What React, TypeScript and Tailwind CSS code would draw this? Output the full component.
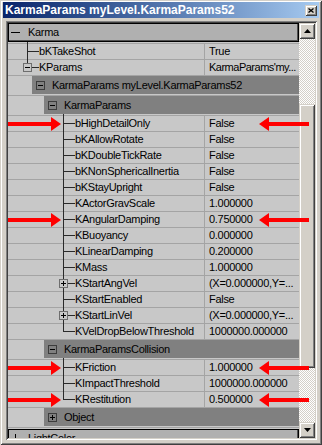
import React from "react";

type Depth = 0 | 1;

const D = {
  0: {
    v: "left-[19px]",
    h: "left-[19px] w-[12px]",
    box: "left-[15px]",
    hb: "left-[24px] w-[7px]",
    text: "pl-[31px]",
  },
  1: {
    v: "left-[55px]",
    h: "left-[55px] w-[12px]",
    box: "left-[51px]",
    hb: "left-[60px] w-[7px]",
    text: "pl-[67px]",
  },
};

function Expander({ sign, className }: { sign: "plus" | "minus"; className: string }) {
  return (
    <span className={`absolute top-[3px] h-[9px] w-[9px] border border-[#6e6e6e] bg-[#c8c8c8] ${className}`}>
      <span className="absolute left-[1px] top-[3px] h-px w-[5px] bg-black" />
      {sign === "plus" && <span className="absolute left-[3px] top-[1px] h-[5px] w-px bg-black" />}
    </span>
  );
}

function Row({
  name,
  value,
  depth,
  last,
  up,
  expand,
  tight,
}: {
  name: string;
  value: string;
  depth: Depth;
  last?: boolean;
  up?: boolean;
  expand?: "plus" | "minus";
  tight?: boolean;
}) {
  const d = D[depth];
  return (
    <div className="relative flex h-[16px] shrink-0 border-b border-[#a4a4a4]">
      <div className="relative w-[196px] shrink-0">
        <div className={`overflow-hidden whitespace-nowrap leading-[15px] ${d.text}`}>{name}</div>
        <span
          className={`absolute w-px bg-[#2a2a2a] ${d.v} ${
            up ? "-top-[2px]" : "top-0"
          } ${last ? (up ? "h-[10px]" : "h-[8px]") : up ? "h-[18px]" : "h-[16px]"}`}
        />
        {expand ? (
          <>
            <span className={`absolute top-[7px] h-px bg-[#2a2a2a] ${d.hb}`} />
            <Expander sign={expand} className={d.box} />
          </>
        ) : (
          <span className={`absolute top-[7px] h-px bg-[#2a2a2a] ${d.h}`} />
        )}
      </div>
      <div
        className={`flex-1 overflow-hidden whitespace-nowrap border-l border-[#a4a4a4] pl-[4px] leading-[15px] ${
          tight ? "tracking-[-0.5px]" : ""
        }`}
      >
        {value}
      </div>
    </div>
  );
}

function TopHeader({ name, sign }: { name: string; sign: "plus" | "minus" }) {
  return (
    <div className="flex h-[19px] shrink-0 items-center border border-black bg-[#b0b0b0] shadow-[inset_-1px_-1px_0_#505050]">
      <span className="relative ml-[2px] h-[9px] w-[9px] shrink-0">
        <span className="absolute left-0 top-[4px] h-px w-[9px] bg-black" />
        {sign === "plus" && <span className="absolute left-[4px] top-0 h-[9px] w-px bg-black" />}
      </span>
      <span className="ml-[8px] whitespace-nowrap leading-[15px]">{name}</span>
    </div>
  );
}

function SubHeader({
  name,
  sign,
  indent,
}: {
  name: string;
  sign: "plus" | "minus";
  indent: "l1" | "l2";
}) {
  return (
    <div className="flex shrink-0 flex-col">
      <div className="flex h-[18px]">
        <div className={`shrink-0 ${indent === "l1" ? "w-[24px]" : "w-[36px]"}`} />
        <div className="flex flex-1 items-center bg-[#808080]">
          <span className="relative ml-[4px] h-[9px] w-[9px] shrink-0 border border-[#3c3c3c]">
            <span className="absolute left-[1px] top-[3px] h-px w-[5px] bg-black" />
            {sign === "plus" && <span className="absolute left-[3px] top-[1px] h-[5px] w-px bg-black" />}
          </span>
          <span className="ml-[7px] whitespace-nowrap leading-[15px]">{name}</span>
        </div>
      </div>
      <div className="h-[2px] border-b border-[#a4a4a4]" />
    </div>
  );
}

const raised =
  "shadow-[inset_1px_1px_0_#d4d0c8,inset_-1px_-1px_0_#404040,inset_2px_2px_0_#ffffff,inset_-2px_-2px_0_#808080]";

function ScrollButton({ dir }: { dir: "up" | "down" }) {
  return (
    <div className={`flex h-[16px] w-[16px] shrink-0 items-center justify-center bg-[#d4d0c8] ${raised}`}>
      <svg width="7" height="4" viewBox="0 0 7 4">
        {dir === "up" ? (
          <polygon points="3.5,0 7,4 0,4" fill="#000" />
        ) : (
          <polygon points="0,0 7,0 3.5,4" fill="#000" />
        )}
      </svg>
    </div>
  );
}

const karmaRows: { name: string; value: string; expand?: "plus" }[] = [
  { name: "bHighDetailOnly", value: "False" },
  { name: "bKAllowRotate", value: "False" },
  { name: "bKDoubleTickRate", value: "False" },
  { name: "bKNonSphericalInertia", value: "False" },
  { name: "bKStayUpright", value: "False" },
  { name: "KActorGravScale", value: "1.000000" },
  { name: "KAngularDamping", value: "0.750000" },
  { name: "KBuoyancy", value: "0.000000" },
  { name: "KLinearDamping", value: "0.200000" },
  { name: "KMass", value: "1.000000" },
  { name: "KStartAngVel", value: "(X=0.000000,Y=...", expand: "plus" },
  { name: "KStartEnabled", value: "False" },
  { name: "KStartLinVel", value: "(X=0.000000,Y=...", expand: "plus" },
  { name: "KVelDropBelowThreshold", value: "1000000.000000" },
];

const collisionRows = [
  { name: "KFriction", value: "1.000000" },
  { name: "KImpactThreshold", value: "1000000.000000" },
  { name: "KRestitution", value: "0.500000" },
];

const arrowYs = [124, 220, 368, 400];

export default function App() {
  return (
    <div
      className={`relative flex h-[445px] w-[322px] flex-col overflow-hidden bg-[#d4d0c8] font-['Liberation_Sans',Arial,sans-serif] text-[11px] tracking-[-0.3px] text-black ${raised}`}
    >
      {/* Title bar */}
      <div className="mx-[3px] mt-[2px] flex h-[16px] shrink-0 items-center bg-linear-to-r from-[#0a246a] to-[#a6caf0]">
        <span className="pl-[2px] text-[12px] font-bold leading-[16px] tracking-normal whitespace-nowrap text-white">
          KarmaParams myLevel.KarmaParams52
        </span>
        <div className={`ml-auto mr-[2px] flex h-[11px] w-[12px] items-center justify-center bg-[#d4d0c8] ${raised}`}>
          <svg width="6" height="5" viewBox="0 0 6 5">
            <path d="M0.5 0.5 L5.5 4.5 M5.5 0.5 L0.5 4.5" stroke="#000" strokeWidth="1.3" />
          </svg>
        </div>
      </div>

      {/* Sunken frame */}
      <div className="ml-[6px] mr-[5px] mt-[3px] flex h-[419px] shrink-0 p-[2px] shadow-[inset_1px_1px_0_#808080,inset_-1px_-1px_0_#ffffff,inset_2px_2px_0_#404040,inset_-2px_-2px_0_#d4d0c8]">
        <div className="flex h-[415px] w-[291px] shrink-0 flex-col overflow-hidden bg-[#c8c8c8]">
          <TopHeader name="Karma" sign="minus" />
          <div className="h-[2px] shrink-0 border-b border-[#a4a4a4]" />
          <Row depth={0} name="bKTakeShot" value="True" up />
          <Row depth={0} name="KParams" value="KarmaParams'my..." last expand="minus" tight />
          <SubHeader indent="l1" name="KarmaParams myLevel.KarmaParams52" sign="minus" />
          <SubHeader indent="l2" name="KarmaParams" sign="minus" />
          {karmaRows.map((r, i) => (
            <Row
              key={r.name}
              depth={1}
              name={r.name}
              value={r.value}
              expand={r.expand}
              last={i === karmaRows.length - 1}
              up={i === 0}
            />
          ))}
          <SubHeader indent="l2" name="KarmaParamsCollision" sign="minus" />
          {collisionRows.map((r, i) => (
            <Row
              key={r.name}
              depth={1}
              name={r.name}
              value={r.value}
              last={i === collisionRows.length - 1}
              up={i === 0}
            />
          ))}
          <SubHeader indent="l2" name="Object" sign="plus" />
          <div className="h-px shrink-0" />
          <TopHeader name="LightColor" sign="plus" />
        </div>

        {/* Scrollbar */}
        <div className="flex w-[16px] shrink-0 flex-col">
          <ScrollButton dir="up" />
          <div className="flex-1 bg-[repeating-conic-gradient(#ffffff_0%_25%,#d4d0c8_0%_50%)] bg-[length:2px_2px]">
            <div className={`mt-[65px] h-[264px] w-[16px] bg-[#d4d0c8] ${raised}`} />
          </div>
          <ScrollButton dir="down" />
        </div>
      </div>

      {/* Red annotation arrows */}
      <svg className="pointer-events-none absolute left-0 top-0" width="322" height="445">
        {arrowYs.map((y) => (
          <g key={y} fill="#ff0000">
            <rect x="8" y={y - 2} width="44" height="4" />
            <polygon points={`51,${y - 7} 61,${y} 51,${y + 7}`} />
            <polygon points={`259,${y} 269,${y - 7} 269,${y + 7}`} />
            <rect x="268" y={y - 2} width="41" height="4" />
          </g>
        ))}
      </svg>
    </div>
  );
}
